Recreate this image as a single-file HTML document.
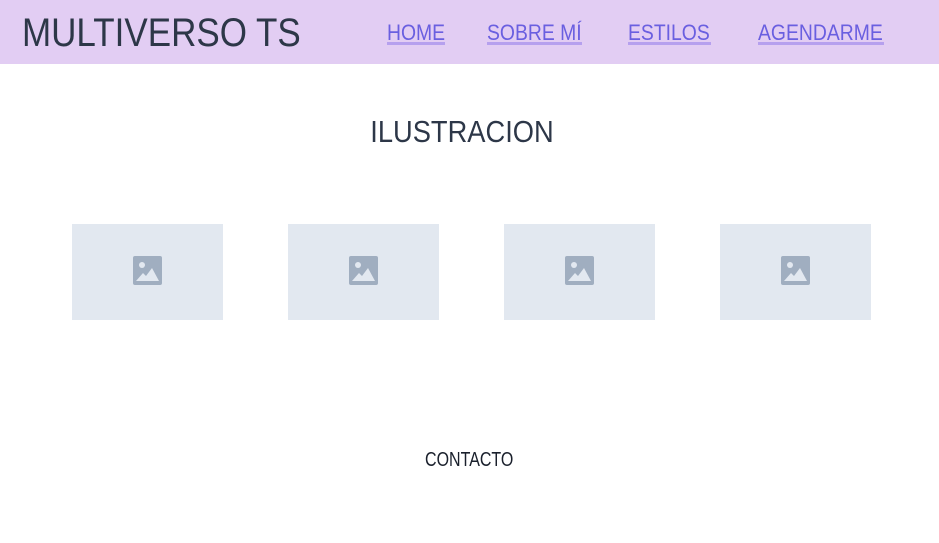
<!DOCTYPE html>
<html><head><style>
*{margin:0;padding:0;box-sizing:border-box}
body{width:939px;height:543px;background:#fff;font-family:"Liberation Sans",sans-serif;color:#2d3748;position:relative;overflow:hidden}
header{position:absolute;left:0;top:0;width:939px;height:64px;background:#e2cdf3}
.t{position:absolute;white-space:nowrap;transform-origin:0 0}
.logo{left:22px;top:11px;font-size:40px;transform:scaleX(0.875);color:#2d3748}
.nav{top:20px;font-size:22px;color:#6a5fe0;transform:scaleX(0.88)}
.ul{position:absolute;top:42px;height:3px;background:#b6a0ee}
.img{position:absolute;top:224px;width:151px;height:96px;background:#e2e8f0}
.img svg{position:absolute;left:61px;top:32px}
</style></head><body>
<header>
<div class="t logo">MULTIVERSO TS</div>
<div class="t nav" style="left:387px">HOME</div><div class="ul" style="left:387px;width:58px"></div>
<div class="t nav" style="left:487px">SOBRE MÍ</div><div class="ul" style="left:487px;width:95px"></div>
<div class="t nav" style="left:628px">ESTILOS</div><div class="ul" style="left:628px;width:83px"></div>
<div class="t nav" style="left:758px">AGENDARME</div><div class="ul" style="left:758px;width:126px"></div>
</header>
<div class="t" style="left:0;width:1050px;text-align:center;top:114px;font-size:31px;transform:scaleX(0.88)">ILUSTRACION</div>
<div class="img" style="left:72px"><svg width="29" height="29" viewBox="0 0 29 29"><rect width="29" height="29" rx="2" fill="#a0aec0"/><circle cx="9" cy="9" r="3" fill="#e2e8f0"/><path d="M3 25 L10 17 L13 20 L19 12 L26 25 Z" fill="#e2e8f0"/></svg></div>
<div class="img" style="left:288px"><svg width="29" height="29" viewBox="0 0 29 29"><rect width="29" height="29" rx="2" fill="#a0aec0"/><circle cx="9" cy="9" r="3" fill="#e2e8f0"/><path d="M3 25 L10 17 L13 20 L19 12 L26 25 Z" fill="#e2e8f0"/></svg></div>
<div class="img" style="left:504px"><svg width="29" height="29" viewBox="0 0 29 29"><rect width="29" height="29" rx="2" fill="#a0aec0"/><circle cx="9" cy="9" r="3" fill="#e2e8f0"/><path d="M3 25 L10 17 L13 20 L19 12 L26 25 Z" fill="#e2e8f0"/></svg></div>
<div class="img" style="left:720px"><svg width="29" height="29" viewBox="0 0 29 29"><rect width="29" height="29" rx="2" fill="#a0aec0"/><circle cx="9" cy="9" r="3" fill="#e2e8f0"/><path d="M3 25 L10 17 L13 20 L19 12 L26 25 Z" fill="#e2e8f0"/></svg></div>
<div class="t" style="left:0;width:1173px;text-align:center;top:449px;font-size:20px;transform:scaleX(0.80);color:#1a202c">CONTACTO</div>
</body></html>
